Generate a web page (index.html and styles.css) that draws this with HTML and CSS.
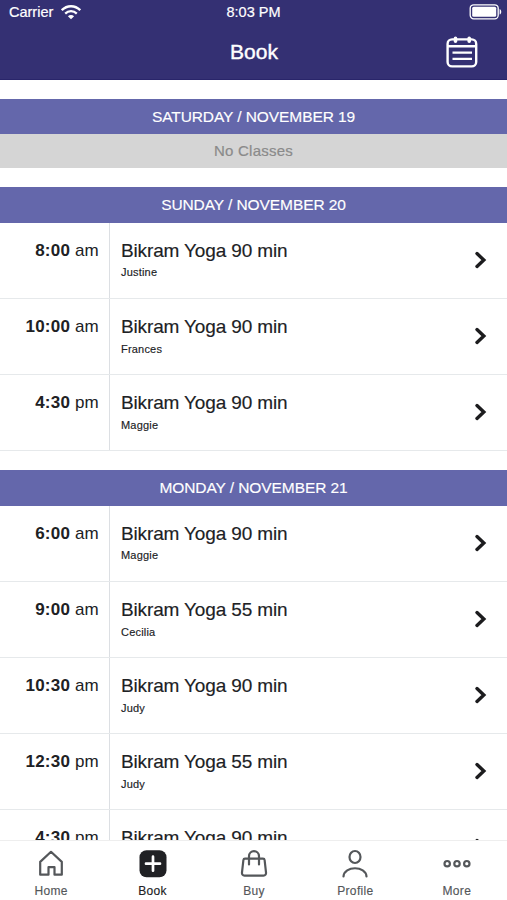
FILE: index.html
```html
<!DOCTYPE html>
<html lang="en">
<head>
<meta charset="utf-8">
<title>Book</title>
<link rel="stylesheet" href="styles.css">
</head>
<body>
<div class="app">
  <header class="top">
    <div class="status">
      <div class="carrier"><span>Carrier</span>
        <svg width="20" height="15" viewBox="0 0 20 15" fill="none" stroke="#fff" stroke-width="2.3"><path d="M.8 5.2C6-.1 14-.1 19.2 5.2M4.2 8.6c3.3-3.2 8.3-3.2 11.6 0"/><path d="M10 14.2 6.9 11.3c1.8-1.6 4.4-1.6 6.2 0z" fill="#fff" stroke="none"/></svg>
      </div>
      <span class="clock">8:03 PM</span>
      <svg class="battery" width="33" height="16" viewBox="0 0 33 16"><rect x="1.2" y=".8" width="28" height="14" rx="3.5" fill="none" stroke="#fff" stroke-width="1.3"/><rect x="3.2" y="2.8" width="24" height="10" rx="1.5" fill="#fff"/><path d="M30.6 5c2.2.6 2.2 5 0 5.6z" fill="#fff"/></svg>
    </div>
    <div class="nav">
      <h1>Book</h1>
      <svg class="calendar" width="32" height="32" viewBox="0 0 32 32" fill="none" stroke="#fff" stroke-width="2.4" stroke-linecap="round"><rect x="1.6" y="3.4" width="28.6" height="27" rx="4.5"/><path d="M2 10.3h28M6.500 16.600h19.500M6.500 22.900h19.500" stroke-linecap="butt"/><path d="M9.500 2.200v3M23.200 2.200v3" stroke-width="3.600"/></svg>
    </div>
  </header>

  <main class="schedule">
    <section class="day">
      <h2>SATURDAY / NOVEMBER 19</h2>
      <p class="empty">No Classes</p>
    </section>
    <section class="day">
      <h2>SUNDAY / NOVEMBER 20</h2>
      <div class="row"><div class="time"><b>8:00</b> am</div><div class="info"><h3>Bikram Yoga 90 min</h3><p>Justine</p></div><svg class="chevron" viewBox="0 0 12 18"><path d="m2 2.6 6.8 6.4L2 15.4"/></svg></div>
      <div class="row"><div class="time"><b>10:00</b> am</div><div class="info"><h3>Bikram Yoga 90 min</h3><p>Frances</p></div><svg class="chevron" viewBox="0 0 12 18"><path d="m2 2.6 6.8 6.4L2 15.4"/></svg></div>
      <div class="row"><div class="time"><b>4:30</b> pm</div><div class="info"><h3>Bikram Yoga 90 min</h3><p>Maggie</p></div><svg class="chevron" viewBox="0 0 12 18"><path d="m2 2.6 6.8 6.4L2 15.4"/></svg></div>
    </section>
    <section class="day">
      <h2>MONDAY / NOVEMBER 21</h2>
      <div class="row"><div class="time"><b>6:00</b> am</div><div class="info"><h3>Bikram Yoga 90 min</h3><p>Maggie</p></div><svg class="chevron" viewBox="0 0 12 18"><path d="m2 2.6 6.8 6.4L2 15.4"/></svg></div>
      <div class="row"><div class="time"><b>9:00</b> am</div><div class="info"><h3>Bikram Yoga 55 min</h3><p>Cecilia</p></div><svg class="chevron" viewBox="0 0 12 18"><path d="m2 2.6 6.8 6.4L2 15.4"/></svg></div>
      <div class="row"><div class="time"><b>10:30</b> am</div><div class="info"><h3>Bikram Yoga 90 min</h3><p>Judy</p></div><svg class="chevron" viewBox="0 0 12 18"><path d="m2 2.6 6.8 6.4L2 15.4"/></svg></div>
      <div class="row"><div class="time"><b>12:30</b> pm</div><div class="info"><h3>Bikram Yoga 55 min</h3><p>Judy</p></div><svg class="chevron" viewBox="0 0 12 18"><path d="m2 2.6 6.8 6.4L2 15.4"/></svg></div>
      <div class="row"><div class="time"><b>4:30</b> pm</div><div class="info"><h3>Bikram Yoga 90 min</h3></div><svg class="chevron" viewBox="0 0 12 18"><path d="m2 2.6 6.8 6.4L2 15.4"/></svg></div>
    </section>
  </main>

  <nav class="tabs">
    <div class="tab"><svg viewBox="0 0 30 30"><path d="M4.200 12.900 15 2.800l10.800 10.100v12.800h-7.300v-7.500h-6v7.500H4.200z"/></svg><span>Home</span></div>
    <div class="tab active"><svg viewBox="0 0 30 30"><rect class="solid" x="1.5" y="1.2" width="27" height="27" rx="7"/><path class="plus" d="M15 7.700v14M8 14.700h14"/></svg><span>Book</span></div>
    <div class="tab"><svg viewBox="0 0 30 30"><path d="M6 9.6h18c1 0 1.5.5 1.6 1.4l1.4 12.4c.2 1.8-.7 3.3-2.5 3.3h-19C3.700 26.700 2.800 25.200 3 23.400L4.400 11c.1-.9.600-1.400 1.600-1.400zM10 15.500V7.300C10 .5 20 .5 20 7.300v8.200"/></svg><span>Buy</span></div>
    <div class="tab"><svg viewBox="0 0 30 30"><ellipse cx="15" cy="8" rx="5.500" ry="6"/><path d="M3.500 27.500c.5-11 22.500-11 23 0"/></svg><span>Profile</span></div>
    <div class="tab"><svg viewBox="0 0 30 30"><circle cx="5.200" cy="14.700" r="2.700"/><circle cx="15" cy="14.700" r="2.700"/><circle cx="24.800" cy="14.700" r="2.700"/></svg><span>More</span></div>
  </nav>
</div>
</body>
</html>
```
FILE: styles.css
```css
* { box-sizing: border-box; margin: 0; padding: 0; }
body { font-family: "Liberation Sans", Arial, sans-serif; color: #202124; background: #fff; }
svg { display: block; flex: none; }
.app { width: 507px; height: 900px; display: flex; flex-direction: column; overflow: hidden; }
.top { height: 80px; flex: none; background: #343073; color: #fff; border-bottom: 1px solid #29256a; }
.status { height: 24px; padding: 0 5px 0 9px; display: grid; grid-template-columns: 1fr auto 1fr; align-items: center; font-size: 14.5px; }
.carrier { display: flex; align-items: center; gap: 8px; }
.clock { margin-left: -4px; -webkit-text-stroke: .2px #fff; }
.carrier span { -webkit-text-stroke: .2px #fff; }
.battery { justify-self: end; }
.nav { height: 55px; padding-right: 29px; display: grid; grid-template-columns: 1fr auto 1fr; align-items: center; }
.nav h1 { grid-column: 2; margin-left: 30px; font-size: 21px; font-weight: 400; -webkit-text-stroke: .4px #fff; }
.calendar { justify-self: end; }
.schedule { flex: 1; min-height: 0; overflow: hidden; padding-top: 18.5px; }
.day { margin-bottom: 18.800px; }
.day h2 { height: 35.700px; line-height: 35px; background: #6467ab; color: #fff; text-align: center; font-size: 15.5px; font-weight: 400; letter-spacing: -.08px; -webkit-text-stroke: .15px #fff; }
.empty { height: 34.300px; line-height: 34px; background: #d5d5d5; color: #8a8a8a; text-align: center; font-size: 15px; letter-spacing: .25px; -webkit-text-stroke: .2px #8a8a8a; }
.row { height: 76.150px; display: flex; border-bottom: 1px solid #e6e9eb; }
.time { width: 110px; border-right: 1px solid #dcdfe3; padding: 17px 10px 0 0; text-align: right; font-size: 17px; line-height: 21px; letter-spacing: .2px; }
.info { flex: 1; padding: 17px 0 0 11px; }
.info h3 { font-size: 19px; line-height: 21px; font-weight: 400; letter-spacing: -.14px; -webkit-text-stroke: .15px #202124; }
.info p { font-size: 11px; line-height: 14px; margin-top: 4.500px; letter-spacing: .2px; -webkit-text-stroke: .15px #202124; }
.chevron { width: 12px; height: 18px; margin: 28px 20px 0 0; fill: none; stroke: #1c1c1e; stroke-width: 3.400; stroke-linecap: round; }
.tabs { height: 60px; flex: none; display: grid; grid-template-columns: repeat(5, 1fr); border-top: 1px solid #eee; background: #fff; }
.tab { display: flex; flex-direction: column; align-items: center; padding: 8px 0 0 1px; gap: 5px; color: #54575a; font-size: 12px; line-height: 14px; letter-spacing: .35px; -webkit-text-stroke: .15px currentColor; }
.tab svg { width: 30px; height: 30px; fill: none; stroke: #54575a; stroke-width: 2.200; stroke-linejoin: round; stroke-linecap: round; }
.active { color: #202124; }
.tab .solid { fill: #202124; stroke: none; }
.tab .plus { stroke: #fff; stroke-width: 2.700; }
```
